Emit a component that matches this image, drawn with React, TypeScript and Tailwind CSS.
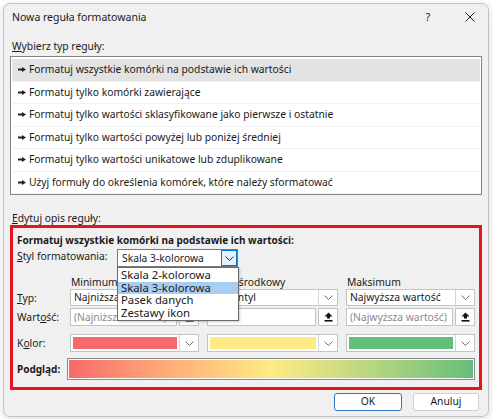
import React from "react";

function Chevron({ color = "#6b6b6b" }: { color?: string }) {
  return (
    <svg width="9" height="5" viewBox="0 0 9 5">
      <polyline points="0.5,0.5 4.5,4.5 8.5,0.5" fill="none" stroke={color} strokeWidth="1" />
    </svg>
  );
}

function UploadIcon() {
  return (
    <svg width="9" height="10" viewBox="0 0 9 10">
      <polygon points="4.5,0.5 8.5,4.5 6,4.5 6,6.5 3,6.5 3,4.5 0.5,4.5" fill="#111" />
      <rect x="0.5" y="8" width="8" height="1.6" fill="#111" />
    </svg>
  );
}

function RuleArrow() {
  return (
    <svg width="8" height="5" viewBox="0 0 8 5" className="shrink-0">
      <polygon points="0,1.6 4,1.6 4,0 8,2.5 4,5 4,3.4 0,3.4" fill="#222" />
    </svg>
  );
}

function Combo({ text }: { text: string }) {
  return (
    <div className="flex h-[17px] border border-[#c4c4c4] bg-white">
      <div className="flex-1 overflow-hidden whitespace-nowrap pl-[3px] text-[10.3px] leading-[15px] text-[#1a1a1a]">{text}</div>
      <div className="flex w-[19px] items-center justify-center border-l border-[#d6d6d6]">
        <Chevron />
      </div>
    </div>
  );
}

function ValueInput({ text, placeholder }: { text: string; placeholder?: boolean }) {
  return (
    <div className="flex h-[18px] gap-[2px]">
      <div
        className={
          "flex-1 overflow-hidden whitespace-nowrap border border-[#c4c4c4] bg-white pl-[3px] text-[10.3px] leading-[16px] " +
          (placeholder ? "text-[#8a8a8a]" : "text-[#1a1a1a]")
        }
      >
        {text}
      </div>
      <div className="flex w-[20px] items-center justify-center border border-[#c4c4c4] bg-white">
        <UploadIcon />
      </div>
    </div>
  );
}

function ColorPick({ color }: { color: string }) {
  return (
    <div className="flex h-[18px] border border-[#c4c4c4] bg-white">
      <div className="flex-1 p-[2px]">
        <div className="h-full w-full" style={{ backgroundColor: color }} />
      </div>
      <div className="flex w-[19px] items-center justify-center border-l border-[#d6d6d6]">
        <Chevron />
      </div>
    </div>
  );
}

const rules = [
  "Formatuj wszystkie komórki na podstawie ich wartości",
  "Formatuj tylko komórki zawierające",
  "Formatuj tylko wartości sklasyfikowane jako pierwsze i ostatnie",
  "Formatuj tylko wartości powyżej lub poniżej średniej",
  "Formatuj tylko wartości unikatowe lub zduplikowane",
  "Użyj formuły do określenia komórek, które należy sformatować",
];

export default function App() {
  return (
    <div className="h-[419px] w-[493px] bg-white pl-[3px] pt-[3px] font-['Noto_Sans',sans-serif] text-[#1a1a1a]">
      <div className="relative flex h-[414px] w-[486px] flex-col rounded-[7px] border border-[#c2c2c2] bg-[#f0f0f0] shadow-[0_2px_8px_rgba(0,0,0,0.15)]">
        {/* Title bar */}
        <div className="flex h-[26px] shrink-0 items-center pl-[8px]">
          <div className="flex-1 text-[10.5px] leading-[16px]">Nowa reguła formatowania</div>
          <div className="w-[20px] text-center text-[11px] leading-[16px]">?</div>
          <div className="ml-[22px] mr-[8px] flex w-[20px] items-center justify-center">
            <svg width="10" height="10" viewBox="0 0 10 10">
              <path d="M0.5 0.5 L9.5 9.5 M9.5 0.5 L0.5 9.5" stroke="#222" strokeWidth="1" />
            </svg>
          </div>
        </div>

        <div className="flex flex-1 flex-col px-[6px]">
          <div className="mt-[8px] pl-[2px] text-[10.3px] leading-[16px]">
            <span className="underline">W</span>ybierz typ reguły:
          </div>
          <div className="mt-[2px] border border-[#858585] bg-white px-[1px] pt-[2px]">
            {rules.map((r, i) => (
              <div
                key={r}
                className={
                  "flex h-[22.5px] items-center gap-[3px] border-b border-[#f2f2f2] pl-[6px] text-[10.3px] " +
                  (i === 0 ? "bg-[#e3e3e3]" : "")
                }
              >
                <RuleArrow />
                <span className="whitespace-nowrap">{r}</span>
              </div>
            ))}
          </div>

          <div className="mt-[16px] pl-[2px] text-[10.3px] leading-[14px]">
            <span className="underline">E</span>dytuj opis reguły:
          </div>

          {/* Red highlighted panel */}
          <div className="border-[3px] border-[#e8141b] px-[4px] pb-[7px] pt-[5px]">
            <div className="text-[10px] font-bold leading-[14px]">
              Formatuj wszystkie komórki na podstawie ich wartości:
            </div>
            <div className="mt-[2px] flex items-start">
              <div className="w-[100px] whitespace-nowrap text-[10.3px] leading-[14px]">
                <span className="underline">S</span>tyl formatowania:
              </div>
              <div className="relative w-[121px]">
                <div className="flex h-[18px] border border-[#7a7a7a] bg-white">
                  <div className="flex-1 pl-[4px] text-[10.3px] leading-[16px]">Skala 3-kolorowa</div>
                  <div className="flex w-[16px] items-center justify-center border border-[#0078d4] bg-[#e5f1fb]">
                    <Chevron color="#333" />
                  </div>
                </div>
                <div className="absolute left-0 top-[18px] z-10 w-[122px] border border-[#6a6a6a] bg-white py-[1px] text-[11.3px] leading-[12.6px] shadow-[1px_1px_2px_rgba(0,0,0,0.2)]">
                  <div className="pl-[3px]">Skala 2-kolorowa</div>
                  <div className="bg-[#a7cdf0] pl-[3px]">Skala 3-kolorowa</div>
                  <div className="pl-[3px]">Pasek danych</div>
                  <div className="pl-[3px]">Zestawy ikon</div>
                </div>
              </div>
            </div>

            <div className="mt-[8px] grid grid-cols-[45px_129px_131px_129px] gap-x-[8px] text-[10.3px] leading-[14px]">
              <div />
              <div className="pl-[1px]">Minimum</div>
              <div className="pl-[1px]">Punkt środkowy</div>
              <div className="pl-[1px]">Maksimum</div>
            </div>

            <div className="grid grid-cols-[45px_129px_131px_129px] items-center gap-x-[8px] text-[10.3px]">
              <div className="leading-[14px]">
                <span className="underline">T</span>yp:
              </div>
              <Combo text="Najniższa wartość" />
              <Combo text="Percentyl" />
              <Combo text="Najwyższa wartość" />
            </div>

            <div className="mt-[2px] grid grid-cols-[45px_129px_131px_129px] items-center gap-x-[8px] text-[10.3px]">
              <div className="leading-[14px]">
                Wart<span className="underline">o</span>ść:
              </div>
              <ValueInput text="(Najniższa wartość)" placeholder />
              <ValueInput text="50" />
              <ValueInput text="(Najwyższa wartość)" placeholder />
            </div>

            <div className="mt-[8px] grid grid-cols-[45px_129px_131px_129px] items-center gap-x-[8px] text-[10.3px]">
              <div className="leading-[14px]">
                K<span className="underline">o</span>lor:
              </div>
              <ColorPick color="#f8696b" />
              <ColorPick color="#ffeb84" />
              <ColorPick color="#63be7b" />
            </div>

            <div className="mt-[6px] flex items-center">
              <div className="w-[50px] text-[10px] font-bold leading-[14px]">Podgląd:</div>
              <div className="h-[22px] flex-1 border border-[#8a8a8a] bg-white p-[1px]">
                <div className="h-full w-full bg-gradient-to-r from-[#f8696b] via-[#ffeb84] to-[#63be7b]" />
              </div>
            </div>
          </div>

          <div className="mt-[3px] flex justify-end gap-[11px] pr-[3px]">
            <div className="flex h-[18px] w-[68px] items-center justify-center rounded-[3px] border border-[#2a78c8] bg-white text-[10.3px]">
              OK
            </div>
            <div className="flex h-[18px] w-[66px] items-center justify-center rounded-[3px] border border-[#d0d0d0] bg-white text-[10.3px]">
              Anuluj
            </div>
          </div>
        </div>
      </div>
    </div>
  );
}
